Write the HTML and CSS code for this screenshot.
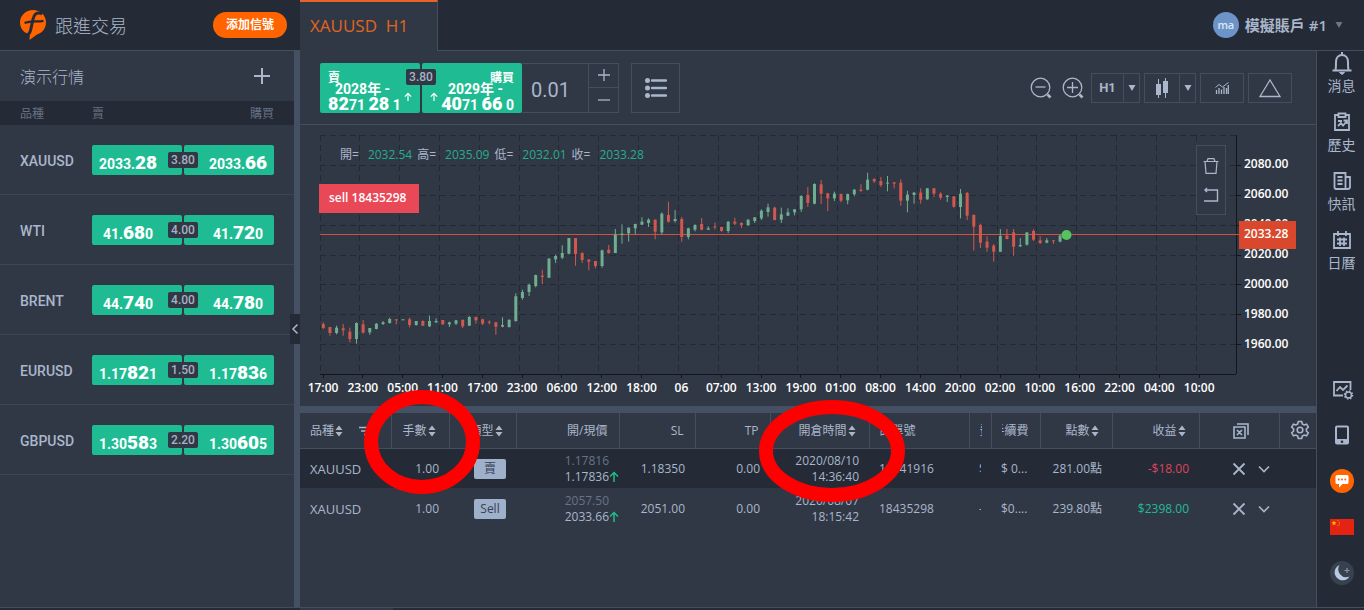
FILE: index.html
```html
<!DOCTYPE html>
<html lang="zh-Hant">
<head>
<meta charset="utf-8">
<title>跟進交易</title>
<link rel="stylesheet" href="styles.css">
</head>
<body>
<svg class="defs" aria-hidden="true">
  <symbol id="sort" viewBox="0 0 8 12"><path d="M4 0.500 7.500 5H0.500zM4 11.500 0.500 7H7.500z" fill="currentColor"/></symbol>
  <symbol id="cross" viewBox="0 0 14 14"><path d="M1.500 1.500 12.500 12.500M12.500 1.500 1.500 12.500" fill="none" stroke="currentColor" stroke-width="1.800"/></symbol>
  <symbol id="down" viewBox="0 0 12 8"><path d="M1 1.500 6 6.500 11 1.500" fill="none" stroke="currentColor" stroke-width="1.600"/></symbol>
  <symbol id="up" viewBox="0 0 10 12"><path d="M5 11V1.500M1 5.500 5 1.500 9 5.500" fill="none" stroke="currentColor" stroke-width="1.500"/></symbol>
  <symbol id="caret" viewBox="0 0 8 6"><path d="M0.500 0H7.500L4 6z" fill="currentColor"/></symbol>
</svg>

<header class="topbar">
  <div class="brand">
    <svg class="logo" viewBox="0 0 26 30"><path d="M13 0C20 0 26 5 26 12.500C26 18 22.500 23 17 24.500L9.500 30L9.800 24.500C4 23 0 18.500 0 12.500C0 5.500 6 0 13 0z" fill="#ff6400"/><path d="M22 3.800C16 1.500 13.800 5 12.900 9.500L11 18.500C10.300 22.500 9 25 5.500 26.500" fill="none" stroke="#242b36" stroke-width="3"/><path d="M4.500 13C11 10.600 17 12 23.500 10.800" fill="none" stroke="#242b36" stroke-width="2.200"/></svg>
    <h1 class="brand-name">跟進交易</h1>
    <button class="add-signal" type="button">添加信號</button>
  </div>
  <a class="tab" href="#chart">XAUUSD&nbsp; H1</a>
  <div class="topbar-rest">
    <button class="account" type="button">
      <span class="avatar">ma</span><span>模擬賬戶 #1</span>
      <svg class="caret dim" viewBox="0 0 8 6"><use href="#caret"/></svg>
    </button>
  </div>
</header>

<div class="workspace">
  <aside class="sidebar">
    <div class="side-title">
      <h2>演示行情</h2>
      <button class="plain" type="button" aria-label="添加"><svg class="i16" viewBox="0 0 16 16"><path d="M8 0V16M0 8H16" stroke="currentColor" stroke-width="2"/></svg></button>
    </div>
    <div class="side-head"><span class="side-symbol">品種</span><span>賣</span><span class="push">購買</span></div>
    <ul class="quotes">
      <li><span class="side-symbol">XAUUSD</span><div class="pair"><button type="button">2033.<b>28</b></button><button type="button">2033.<b>66</b></button><span class="spread">3.80</span></div></li>
      <li><span class="side-symbol">WTI</span><div class="pair"><button type="button">41.<b>68</b>0</button><button type="button">41.<b>72</b>0</button><span class="spread">4.00</span></div></li>
      <li><span class="side-symbol">BRENT</span><div class="pair"><button type="button">44.<b>74</b>0</button><button type="button">44.<b>78</b>0</button><span class="spread">4.00</span></div></li>
      <li><span class="side-symbol">EURUSD</span><div class="pair"><button type="button">1.17<b>82</b>1</button><button type="button">1.17<b>83</b>6</button><span class="spread">1.50</span></div></li>
      <li><span class="side-symbol">GBPUSD</span><div class="pair"><button type="button">1.30<b>58</b>3</button><button type="button">1.30<b>60</b>5</button><span class="spread">2.20</span></div></li>
    </ul>
    <button class="collapse" type="button" aria-label="收起"><svg viewBox="0 0 8 12"><path d="M6.500 1.500 2 6 6.500 10.500" fill="none" stroke="currentColor" stroke-width="1.500"/></svg></button>
  </aside>

  <main class="center">
    <div class="toolbar">
      <div class="deal">
        <button class="deal-btn" type="button">
          <span class="deal-text"><span class="deal-label">賣</span><span class="deal-date">2028年 -</span><span class="deal-price"><b>82</b>71 <b>28</b> 1</span></span>
          <svg class="deal-arrow" viewBox="0 0 10 12"><use href="#up"/></svg>
        </button>
        <button class="deal-btn buy" type="button">
          <svg class="deal-arrow" viewBox="0 0 10 12"><use href="#up"/></svg>
          <span class="deal-text"><span class="deal-label">購買</span><span class="deal-date">2029年 -</span><span class="deal-price"><b>40</b>71 <b>66</b> 0</span></span>
        </button>
        <span class="spread">3.80</span>
      </div>
      <div class="volume">
        <input type="text" value="0.01" aria-label="手數">
        <div class="steps">
          <button type="button" aria-label="增加"><svg viewBox="0 0 12 12"><path d="M6 0V12M0 6H12" stroke="currentColor" stroke-width="1.300"/></svg></button>
          <button type="button" aria-label="減少"><svg viewBox="0 0 12 12"><path d="M0 6H12" stroke="currentColor" stroke-width="1.300"/></svg></button>
        </div>
      </div>
      <button class="list-btn" type="button" aria-label="列表"><svg viewBox="0 0 22 20"><g fill="currentColor"><circle cx="2.500" cy="2.500" r="2.500"/><circle cx="2.500" cy="10" r="2.500"/><circle cx="2.500" cy="17.500" r="2.500"/></g><path d="M7 2.500H21M7 10H21M7 17.500H21" stroke="currentColor" stroke-width="2.400" stroke-linecap="round"/></svg></button>
      <div class="tools">
        <button class="plain" type="button" aria-label="縮小"><svg class="i22" viewBox="0 0 22 22" fill="none" stroke="currentColor"><circle cx="10.500" cy="10.500" r="9.300" stroke-width="1.300"/><path d="M5.500 10H15.500" stroke-width="1.300"/><path d="M17.500 17.500 20.500 20.500" stroke-width="2.600"/></svg></button>
        <button class="plain" type="button" aria-label="放大"><svg class="i22" viewBox="0 0 22 22" fill="none" stroke="currentColor"><circle cx="10.500" cy="10.500" r="9.300" stroke-width="1.300"/><path d="M5 10.500H16M10.500 5V16" stroke-width="1.300"/><path d="M17.500 17.500 20.500 20.500" stroke-width="2.600"/></svg></button>
        <div class="split"><button class="w-period" type="button">H1</button><button class="w-drop" type="button" aria-label="週期"><svg class="caret" viewBox="0 0 8 6"><use href="#caret"/></svg></button></div>
        <div class="split"><button class="w-type" type="button" aria-label="K線"><svg class="i20" viewBox="0 0 20 20" fill="currentColor"><path d="M4 6h5v11H4zM6 1h1v19H6zM11 3h5v12h-5zM13 0h1v20h-1z"/></svg></button><button class="w-drop" type="button" aria-label="圖表類型"><svg class="caret" viewBox="0 0 8 6"><use href="#caret"/></svg></button></div>
        <div class="split"><button class="w-tool" type="button" aria-label="指標"><svg class="i14" viewBox="0 0 14 12"><path d="M1.500 12V8M4 12V6M6.500 12V7.500M9 12V5M11.500 12V6M13.300 12V3" stroke="currentColor" stroke-width="1.300"/><path d="M0.500 5.500 4 2.500 7.500 5 13.500 0.500" fill="none" stroke="currentColor"/></svg></button></div>
        <div class="split"><button class="w-tool" type="button" aria-label="圖形"><svg class="i22" viewBox="0 0 22 22"><path d="M11 3 21 19.500H1z" fill="none" stroke="currentColor" stroke-width="1.300"/></svg></button></div>
      </div>
    </div>

    <section class="chart" id="chart">
      <svg class="plot" viewBox="0 0 1016 281" id="plot" role="img" aria-label="XAUUSD H1"></svg>
      <div class="ohlc"><span>開=</span><em>2032.54</em><span>高=</span><em>2035.09</em><span>低=</span><em>2032.01</em><span>收=</span><em>2033.28</em></div>
      <div class="draw-tools">
        <button class="plain" type="button" aria-label="刪除"><svg class="i16" viewBox="0 0 16 16" fill="none" stroke="currentColor" stroke-width="1.200"><path d="M0.500 3.500H15.500M4 3.500 5 0.700H11L12 3.500M2 3.500 3 15.400H13L14 3.500"/></svg></button>
        <button class="plain" type="button" aria-label="撤銷"><svg class="i16" viewBox="0 0 16 16" fill="none" stroke="currentColor" stroke-width="1.400"><path d="M2 3H14.500V14H1M4 1 2 3 4 5"/></svg></button>
      </div>
    </section>

    <section class="positions">
      <table>
        <colgroup><col class="c1"><col class="c2"><col class="c3"><col class="c4"><col class="c5"><col class="c6"><col class="c7"><col class="c8"><col class="c9"><col class="c10"><col class="c11"><col class="c12"><col class="c13"><col class="c14"></colgroup>
        <thead>
          <tr>
            <th class="left"><span class="th spaced">品種<svg class="sort" viewBox="0 0 8 12"><use href="#sort"/></svg><svg class="filter" viewBox="0 0 10 10"><path d="M0 1.500H10M2 5H10M5 8.500H8" stroke="currentColor" stroke-width="1.500"/></svg></span></th>
            <th><span class="th">手數<svg class="sort" viewBox="0 0 8 12"><use href="#sort"/></svg></span></th>
            <th><span class="th">類型<svg class="sort" viewBox="0 0 8 12"><use href="#sort"/></svg></span></th>
            <th class="text-end">開/現價</th><th class="text-end">SL</th><th class="text-end">TP</th>
            <th><span class="th">開倉時間<svg class="sort" viewBox="0 0 8 12"><use href="#sort"/></svg></span></th>
            <th class="left">訂單號</th>
            <th class="left"><span class="sliver">費</span></th>
            <th class="left"><span class="tail">手續費</span></th>
            <th><span class="th">點數<svg class="sort" viewBox="0 0 8 12"><use href="#sort"/></svg></span></th>
            <th><span class="th">收益<svg class="sort" viewBox="0 0 8 12"><use href="#sort"/></svg></span></th>
            <th class="mid shift"><button class="plain" type="button" aria-label="全部平倉"><svg class="i16" viewBox="0 0 16 16" fill="none" stroke="currentColor" stroke-width="1.600"><path d="M1 4H12V15H1zM4 1H15V12M4 7 9 12M9 7 4 12"/></svg></button></th>
            <th class="mid shift"><button class="plain" type="button" aria-label="設置"><svg class="i20" viewBox="0 0 20 20" fill="none" stroke="currentColor" stroke-width="1.600"><path d="M8.300 1.500h3.400l.6 2.500 1.800 1 2.500-.8 1.700 3-1.900 1.800v2l1.900 1.800-1.700 3-2.500-.8-1.800 1-.6 2.500H8.300L7.700 16l-1.800-1-2.500.8-1.700-3L3.600 11V9L1.700 7.200l1.700-3 2.500.8 1.800-1z"/><circle cx="10" cy="10" r="2.800"/></svg></button></th>
          </tr>
        </thead>
        <tbody>
          <tr class="active">
            <td class="left symbol">XAUUSD</td><td>1.00</td><td><span class="side-tag">賣</span></td>
            <td><span class="stack"><i>1.17816</i><span>1.17836</span><svg class="trend" viewBox="0 0 10 12"><use href="#up"/></svg></span></td>
            <td>1.18350</td><td>0.00</td><td><span class="stack"><span>2020/08/10</span><span>14:36:40</span></span></td>
            <td class="left">18441916</td><td class="left"><span class="sliver">$</span></td><td class="left"><span class="cut">$ 0...</span></td><td>281.00點</td><td class="loss">-$18.00</td>
            <td class="mid"><span class="acts"><button class="plain" type="button" aria-label="平倉"><svg class="i14" viewBox="0 0 14 14"><use href="#cross"/></svg></button><button class="plain" type="button" aria-label="更多"><svg class="more" viewBox="0 0 12 8"><use href="#down"/></svg></button></span></td><td></td>
          </tr>
          <tr>
            <td class="left symbol">XAUUSD</td><td>1.00</td><td><span class="side-tag">Sell</span></td>
            <td><span class="stack"><i>2057.50</i><span>2033.66</span><svg class="trend" viewBox="0 0 10 12"><use href="#up"/></svg></span></td>
            <td>2051.00</td><td>0.00</td><td><span class="stack"><span>2020/08/07</span><span>18:15:42</span></span></td>
            <td class="left">18435298</td><td class="left"><span class="sliver">-</span></td><td class="left"><span class="cut">$0....</span></td><td>239.80點</td><td class="gain">$2398.00</td>
            <td class="mid"><span class="acts"><button class="plain" type="button" aria-label="平倉"><svg class="i14" viewBox="0 0 14 14"><use href="#cross"/></svg></button><button class="plain" type="button" aria-label="更多"><svg class="more" viewBox="0 0 12 8"><use href="#down"/></svg></button></span></td><td></td>
          </tr>
        </tbody>
      </table>
      <svg class="ring ring-lots" viewBox="0 0 116 104"><ellipse cx="58" cy="52" rx="51" ry="45"/></svg>
      <svg class="ring ring-time" viewBox="0 0 146 102"><ellipse cx="73" cy="51" rx="66" ry="44"/></svg>
    </section>
  </main>

  <nav class="rail">
    <a href="#news"><svg viewBox="0 0 24 24" fill="none" stroke="currentColor" stroke-width="2"><path d="M2.500 19.500H21.500M5.500 19C6 17 6 14 6 11C6 7 8.500 4 12 4C15.500 4 18 7 18 11C18 14 18 17 18.500 19M12 4V1"/><path d="M9.500 21.500H14.500L12 23.500z" fill="currentColor" stroke-width="1"/></svg>消息</a>
    <a href="#history"><svg viewBox="0 0 24 24" fill="none" stroke="currentColor" stroke-width="1.800"><path d="M8 5H5V20H19V5H16M8.500 3.500H15.500V7H8.500zM8 11H12M8 16 11 13 13 15.500 16.500 11.500M13.500 10.500H17V14"/></svg>歷史</a>
    <a href="#flash"><svg viewBox="0 0 24 24" fill="none" stroke="currentColor" stroke-width="1.800"><path d="M4.500 4H15.500V20H6Q4.500 20 4.500 18zM15.500 8H20V18Q20 20 17.500 20H15M7.500 8H12.500M7.500 11.500H12.500M7.500 15H12.500"/></svg>快訊</a>
    <a href="#calendar"><svg viewBox="0 0 24 24" fill="none" stroke="currentColor" stroke-width="1.800"><path d="M4 6H20V20H4zM8 3V8M16 3V8M7 11.500H17M7 15.500H17M10 9.500V18M14 9.500V18"/></svg>日曆</a>
    <div class="rail-foot">
      <button class="plain" type="button" aria-label="圖表設置"><svg viewBox="0 0 24 24" fill="none" stroke="currentColor" stroke-width="1.800"><path d="M13 18.500H4V5H20.500V13M6.500 14 10 10 13 13 17.500 8.500"/><circle cx="18.500" cy="18" r="3" stroke-width="1.500"/><circle cx="18.500" cy="18" r="4" stroke-width="1.500" stroke-dasharray="1.500 1.640"/></svg></button>
      <button class="plain" type="button" aria-label="手機"><svg viewBox="0 0 24 24"><path d="M7 2.500H17Q19 2.500 19 4.500V19.500Q19 21.500 17 21.500H7Q5 21.500 5 19.500V4.500Q5 2.500 7 2.500z" fill="currentColor"/><path d="M7 4.500H17V16H7z" fill="#242b36"/><circle cx="12" cy="18.700" r="1.300" fill="#242b36"/></svg></button>
      <button class="plain" type="button" aria-label="聊天"><svg viewBox="0 0 24 24"><circle cx="12" cy="12" r="12" fill="#ff6400"/><path d="M7 6H17Q18.500 6 18.500 7.500V13.500Q18.500 15 17 15H12.500L9 18.500V15H7Q5.500 15 5.500 13.500V7.500Q5.500 6 7 6z" fill="#fff"/><g fill="#ff6400"><circle cx="8.700" cy="10.500" r="1"/><circle cx="12" cy="10.500" r="1"/><circle cx="15.300" cy="10.500" r="1"/></g></svg></button>
      <button class="plain" type="button" aria-label="語言"><svg viewBox="0 0 24 24"><path d="M0 4H24V20H0z" fill="#e42313"/><path d="M4 5.500 4.700 7.200 6.500 7.300 5.100 8.500 5.500 10.300 4 9.300 2.500 10.300 2.900 8.500 1.500 7.300 3.300 7.200z" fill="#ffc400"/><g fill="#f28a1e"><circle cx="8" cy="5.500" r=".6"/><circle cx="9.300" cy="7.200" r=".6"/><circle cx="9.300" cy="9.200" r=".6"/><circle cx="8" cy="10.700" r=".6"/></g></svg></button>
      <button class="plain" type="button" aria-label="夜間模式"><svg viewBox="0 0 24 24"><circle cx="12" cy="12" r="12" fill="#38424f"/><path d="M9.500 4A8 8 0 1 0 19.500 15.500A8 8 0 0 1 9.500 4z" fill="#b9c9e4"/><path d="M17 7V12M14.500 9.500H19.500" stroke="#8492a8" stroke-width="1.200"/></svg></button>
    </div>
  </nav>
</div>
<footer class="bottom"><span class="bottom-tab"></span></footer>
<script src="chart.js"></script>
</body>
</html>
```
FILE: styles.css
```css
* { box-sizing: border-box; }
:root {
  --dark: #242b36;
  --panel: #313845;
  --line: #454e5c;
  --text: #a9b6cb;
  --green: #1fbc93;
  --orange: #ff6400;
  --cjk: "Noto Sans CJK TC", sans-serif;
}
body {
  margin: 0; height: 100vh; display: flex; flex-direction: column; overflow: hidden;
  background: var(--panel); color: var(--text);
  font: 12px/16px "Open Sans", var(--cjk);
}
h1, h2, ul { margin: 0; padding: 0; list-style: none; font-weight: 300; }
button, input { margin: 0; padding: 0; border: 0; background: none; color: inherit; font: inherit; border-radius: 0; }
button { display: inline-flex; align-items: center; justify-content: center; }
a { color: inherit; text-decoration: none; }
svg { display: block; flex: none; }
.defs { position: absolute; width: 0; height: 0; }
.i14 { width: 14px; height: 14px; }
.i16 { width: 16px; height: 16px; }
.i20 { width: 20px; height: 20px; }
.i22 { width: 22px; height: 22px; }
.caret { width: 8px; height: 6px; }
.dim { color: #6c7686; }

.topbar { display: flex; height: 51px; flex: none; background: var(--dark); }
.brand { width: 300px; display: flex; align-items: center; padding: 0 13px 0 20px; border-bottom: 1px solid var(--line); }
.logo { width: 26px; height: 30px; }
.brand-name { margin-left: 9px; font: 300 18px/24px var(--cjk); }
.add-signal { margin-left: auto; width: 74px; height: 26px; border-radius: 13px; background: var(--orange); color: #fff; font-weight: 700; }
.tab { width: 138px; padding: 0 10px; border-top: 2px solid #e8622a; border-right: 1px solid var(--line); background: var(--panel); color: #e0651f; font-size: 17px; line-height: 48px; white-space: nowrap; }
.topbar-rest { flex: 1; display: flex; justify-content: flex-end; border-bottom: 1px solid var(--line); padding-right: 21px; }
.account { gap: 6px; font-weight: 600; font-size: 15px; }
.account .caret { margin-left: 2px; }
.avatar { width: 26px; height: 26px; border-radius: 50%; background: #6c94c8; color: #dce6f4; font-size: 11px; line-height: 26px; }

.workspace { flex: 1; min-height: 0; display: flex; }
.sidebar { position: relative; width: 300px; flex: none; border-right: 6px solid #465064; }
.side-title { height: 50px; display: flex; align-items: center; justify-content: space-between; padding: 0 24px 0 20px; }
.side-title h2 { font: 300 16px/24px var(--cjk); }
.side-head { height: 24px; display: flex; align-items: center; padding: 2px 20px 0; background: var(--dark); color: #667184; }
.side-symbol { width: 72px; flex: none; }
.push { margin-left: auto; }
.quotes li { height: 70px; display: flex; align-items: center; padding: 0 20px; border-bottom: 1px solid #3d4552; font: 500 14px/20px Roboto, sans-serif; }
.quotes .side-symbol { padding-top: 2px; }
.pair { position: relative; flex: 1; display: flex; gap: 2px; }
.pair button { display: block; flex: 1; height: 30px; padding-top: 6px; border-radius: 2px; background: var(--green); color: #fff; font: 700 14px/24px Roboto, sans-serif; }
.pair button:first-child { padding-right: 18px; }
.pair button:nth-child(2) { padding-left: 18px; }
.pair b { font-size: 19px; }
.spread { position: absolute; left: 50%; top: 7px; width: 30px; height: 16px; margin-left: -15px; border-radius: 2px; background: var(--panel); color: #a6b1c4; font: 500 12px/17px Roboto, sans-serif; text-align: center; }
.collapse { position: absolute; right: -6px; top: 263px; width: 10px; height: 30px; background: var(--dark); }
.collapse svg { width: 8px; height: 12px; }

.center { flex: 1; min-width: 0; display: flex; flex-direction: column; }
.toolbar { display: flex; align-items: center; height: 74px; flex: none; padding: 0 24px 0 20px; border-bottom: 1px solid var(--line); }
.deal { position: relative; display: flex; gap: 2px; }
.deal .spread { top: 6px; }
.deal-btn { width: 100px; height: 50px; align-items: flex-start; padding: 8px 8px 0; overflow: hidden; border-radius: 2px; background: var(--green); color: #fff; font: 700 14px/20px Roboto, var(--cjk); }
.deal-text { flex: 1; display: flex; flex-direction: column; text-align: left; white-space: nowrap; }
.deal-label { font-size: 12px; line-height: 14px; }
.deal-date { line-height: 8px; padding-left: 7px; }
.deal-price { line-height: 22px; }
.deal-price b { font-size: 18px; }
.buy .deal-text { text-align: right; }
.buy .deal-date { padding: 0 11px 0 0; }
.deal-arrow { width: 8px; height: 10px; margin-top: 21px; }
.volume { display: flex; height: 50px; border: 1px solid var(--line); border-left: 0; }
.volume input { width: 66px; padding: 5px 0 0 9px; font: 400 20px/24px Roboto, sans-serif; }
.steps { width: 30px; display: flex; flex-direction: column; border-left: 1px solid var(--line); }
.steps button { flex: 1; }
.steps button + button { border-top: 1px solid var(--line); }
.steps svg { width: 12px; height: 12px; }
.list-btn { width: 49px; height: 50px; margin-left: 12px; border: 1px solid var(--line); }
.list-btn svg { width: 22px; height: 20px; }
.tools { margin-left: auto; display: flex; align-items: center; gap: 4px; }
.tools .plain { width: 28px; }
.split { display: flex; height: 30px; border: 1px solid var(--line); }
.split button + button { border-left: 1px solid var(--line); }
.w-period { width: 31px; font: 700 13px/20px Roboto, sans-serif; }
.w-type { width: 34px; }
.w-drop { width: 16px; }
.w-tool { width: 42px; }

.chart { position: relative; flex: none; }
.plot { width: 100%; height: auto; }
.plot text { font: 500 12px "Open Sans", sans-serif; fill: #fff; }
.plot .bold { font-weight: 600; }
.ohlc { position: absolute; left: 40px; top: 21px; display: flex; line-height: 18px; }
.ohlc em { margin: 0 5px 0 9px; font-style: normal; color: #26ad8c; }
.draw-tools { position: absolute; right: 90px; top: 20px; width: 30px; height: 70px; display: flex; flex-direction: column; align-items: center; justify-content: center; gap: 13px; border: 1px solid var(--line); background: var(--panel); }

.positions { position: relative; flex: 1; border-top: 7px solid #465064; }
table { width: 100%; table-layout: fixed; border-collapse: collapse; }
.c1 { width: 91px; } .c2 { width: 58px; } .c3 { width: 67px; } .c4 { width: 103px; } .c5 { width: 76px; }
.c6 { width: 75px; } .c7 { width: 99px; } .c8 { width: 100px; } .c9 { width: 22px; } .c10 { width: 49px; }
.c11 { width: 72px; } .c12 { width: 87px; } .c13 { width: 80px; } .c14 { width: 37px; }
th, td { padding: 2px 10px 0; text-align: right; font-weight: 400; white-space: nowrap; }
th { height: 35px; padding-right: 13px; border-right: 1px solid var(--line); border-bottom: 1px solid var(--line); }
.text-end { padding-right: 11px; }
td { height: 40px; }
.left { text-align: left; padding-right: 0; }
.symbol { font-size: 13px; }
.mid { text-align: center; padding: 0; }
.shift { padding-left: 4px; }
.mid .plain, .mid .acts { vertical-align: middle; }
.active { background: var(--dark); }
.th { display: inline-flex; align-items: center; gap: 1px; }
.sort { width: 8px; height: 12px; }
.filter { width: 10px; height: 10px; margin-left: 15px; }
.side-tag { display: inline-block; width: 32px; border-radius: 2px; background: #9fb0cb; color: #374152; line-height: 20px; text-align: center; }
.stack { position: relative; display: inline-flex; flex-direction: column; vertical-align: middle; }
.stack i { font-style: normal; color: #687386; }
.trend { position: absolute; right: -10px; bottom: 2px; width: 10px; height: 12px; color: var(--green); }
.sliver { display: block; width: 2px; overflow: hidden; }
.tail { display: flex; justify-content: flex-end; width: 27px; overflow: hidden; }
.cut { display: block; width: 28px; overflow: hidden; }
.loss { color: #dc4459; }
.gain { color: var(--green); }
.acts { display: inline-flex; align-items: center; gap: 12px; padding-left: 24px; }
.more { width: 12px; height: 8px; }
.ring { position: absolute; fill: none; stroke: #ff0000; stroke-width: 14; pointer-events: none; }
.ring-lots { left: 64px; top: -23px; width: 116px; height: 104px; }
.ring-time { left: 459px; top: -13px; width: 146px; height: 102px; }

.rail { width: 48px; flex: none; display: flex; flex-direction: column; background: var(--dark); border-left: 1px solid var(--line); }
.rail > a { display: flex; flex-direction: column; align-items: center; height: 59px; font: 14px/20px var(--cjk); padding-left: 2px; }
.rail svg { width: 24px; height: 24px; }
.rail-foot { margin-top: auto; display: flex; flex-direction: column; align-items: center; gap: 22px; padding: 0 0 22px 2px; }
.bottom { height: 3px; flex: none; padding-left: 300px; background: var(--dark); border-top: 1px solid var(--line); }
.bottom-tab { display: block; width: 93px; height: 2px; background: var(--panel); }
```
FILE: chart.js
```js
// Each candle: direction (g up, r down), high, body top, body bottom, low.
// Levels are stored in thirds of a plot unit.
const CANDLES = `r592,597,609,612 r606,606,624,632 g602,608,624,628 r597,610,616,632 r608,620,642,652 g592,594,642,656
r585,598,623,626 g609,609,622,629 g594,596,612,613 g588,592,597,600 g578,582,594,596 r583,583,586,598
g583,583,585,585 r578,583,600,607 g588,588,600,602 r586,588,602,603 g572,588,604,606 g580,588,592,594
r585,585,598,599 g590,592,598,606 g585,586,596,600 r583,585,604,609 g573,576,602,603 r575,576,586,596
r581,583,596,600 r586,590,593,598 r591,592,605,629 g577,600,605,607 g582,585,606,608 g505,514,588,590
g494,501,519,524 g476,479,501,513 g449,450,483,487 r434,452,456,478 g399,401,458,459 g389,393,403,414
g361,384,398,402 g339,339,386,388 r339,339,387,422 r382,384,405,414 r402,404,410,436 r408,408,423,430
g374,376,423,428 r360,374,384,386 g312,328,384,384 g298,326,330,356 g308,308,325,350 g296,297,310,328
g277,290,299,301 g280,284,294,306 r284,284,320,343 g262,266,322,328 r230,270,290,293 g255,282,288,293
r276,282,336,350 g308,310,336,343 g298,300,314,319 r279,297,314,316 g304,310,314,315 r293,304,307,313
r305,306,318,320 g288,290,318,324 r278,290,296,301 r292,294,301,309 g283,284,301,302 g276,277,288,294
g253,257,280,285 g236,247,261,275 r245,248,285,286 g248,268,284,294 g250,262,272,273 g252,253,262,271
g210,213,253,261 r186,210,234,246 g175,177,236,238 r165,178,206,237 r204,205,220,258 g200,206,220,228
r206,207,227,232 g206,207,226,238 g192,194,208,214 r178,194,198,200 g143,164,194,196 r160,162,169,174
r156,168,180,186 g153,173,176,199 r172,172,176,190 r163,173,227,242 g197,209,227,262 g201,203,210,236
r190,203,224,236 g189,190,223,224 r189,190,206,216 r202,206,218,224 g210,212,216,231 r213,214,245,248
g192,206,246,280 r201,204,272,285 r268,270,305,377 r296,300,353,369 r334,350,368,380 r357,362,380,410
g312,333,380,381 r312,332,342,343 r312,322,365,393 g339,360,364,366 g322,322,359,362 r313,318,344,348
r334,346,354,357 g339,346,353,355 r345,346,348,357 g328,332,350,352`.split(/\s+/);
const TIMES = "17:00 23:00 05:00 11:00 17:00 23:00 06:00 12:00 18:00 06 07:00 13:00 19:00 01:00 08:00 14:00 20:00 02:00 10:00 16:00 22:00 04:00 10:00".split(" ");
const LEFT = 20, RIGHT = 936, TOP = 10, BOTTOM = 249;
const STEP = (RIGHT - LEFT) / 23;
const ROW = (BOTTOM - TOP) / 8;
const out = [];
const line = (x1, y1, x2, y2, attrs) => out.push(`<path d="M${x1} ${y1}L${x2} ${y2}" ${attrs}/>`);

const grid = 'stroke="#232933" stroke-dasharray="6 4" shape-rendering="crispEdges"';
const axis = 'stroke="#11161d" shape-rendering="crispEdges"';
for (let i = 0; i < 23; i++) line(LEFT + i * STEP, TOP, LEFT + i * STEP, BOTTOM, grid);
for (let i = 0; i < 8; i++) line(LEFT, TOP + i * ROW + 0.5, RIGHT, TOP + i * ROW + 0.5, grid);
line(LEFT, BOTTOM + 0.5, RIGHT, BOTTOM + 0.5, axis);
line(RIGHT + 0.5, TOP, RIGHT + 0.5, BOTTOM, axis);

TIMES.forEach((t, i) => {
  const x = 23 + i * STEP;
  line(x, BOTTOM, x, BOTTOM + 4, axis);
  out.push(`<text class="bold" x="${x}" y="267" text-anchor="middle">${t}</text>`);
});
for (let i = 0; i < 7; i++) {
  line(RIGHT, TOP + (i + 1) * ROW + 0.5, RIGHT + 5, TOP + (i + 1) * ROW + 0.5, axis);
  out.push(`<text class="bold" x="944" y="${43 + i * 30}">${2080 - i * 20}.00</text>`);
}

line(LEFT, 109.5, 939, 109.5, 'stroke="#d2503f"');
CANDLES.forEach((c, i) => {
  const [high, top, bottom, low] = c.slice(1).split(",").map(v => v / 3);
  const color = c[0] === "g" ? "#6fae8f" : "#d2584e";
  const x = 23.3 + i * STEP / 6;
  line(x, high, x, low, `stroke="${color}"`);
  out.push(`<rect x="${x - 1.5}" y="${top}" width="3" height="${Math.max(bottom - top, 1)}" fill="${color}"/>`);
});
out.push('<circle cx="766.5" cy="110" r="5" fill="#55c35e"/>');
out.push('<rect x="19" y="59" width="100" height="29" fill="#e94857"/><text class="bold" x="29" y="77">sell 18435298</text>');
out.push('<rect x="939" y="96" width="57" height="28" fill="#d9482c"/><text class="bold" x="944" y="113">2033.28</text>');
document.getElementById("plot").innerHTML = out.join("");
```
